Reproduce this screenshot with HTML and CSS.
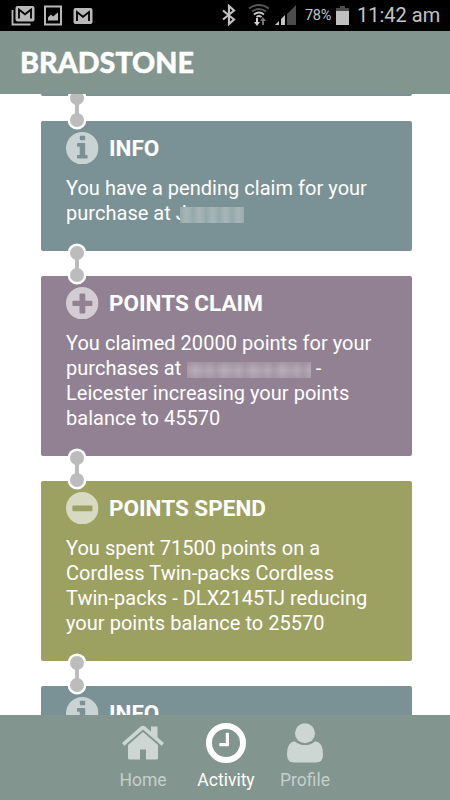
FILE: index.html
```html
<!DOCTYPE html>
<html lang="en">
<head>
<meta charset="utf-8">
<title>Bradstone Activity</title>
<link rel="stylesheet" href="styles.css">
</head>
<body>
<svg class="defs" width="0" height="0" aria-hidden="true">
  <symbol id="link" viewBox="0 0 20 42">
    <circle cx="10" cy="10" r="9.4" fill="#fff"/><circle cx="10" cy="32" r="9.4" fill="#fff"/>
    <path d="M8 10h4v22H8z" fill="#bcbcbc"/>
    <circle cx="10" cy="10" r="7" fill="#bcbcbc"/><circle cx="10" cy="32" r="7" fill="#bcbcbc"/>
  </symbol>
  <symbol id="info" viewBox="0 0 32 32">
    <path fill-rule="evenodd" d="M16 0a16 16 0 1 0 0 32a16 16 0 1 0 0-32zM14.300 3.800h3.900q.7 0 .7.700v3q0 .7-.7.700h-3.900q-.7 0-.7-.7v-3q0-.7.7-.7zM11.500 10.900h6.700q.7 0 .7.700v11.100h1.700q.7 0 .7.700v2q0 .7-.7.700h-9.100q-.7 0-.7-.7v-2q0-.7.7-.7h2v-8.300h-2q-.7 0-.7-.7v-2.100q0-.7.7-.7z"/>
  </symbol>
  <symbol id="plus" viewBox="0 0 32 32">
    <path fill-rule="evenodd" d="M16 0a16 16 0 1 0 0 32a16 16 0 1 0 0-32zM14.300 6.300h3.700q1 0 1 1v6.200h6q1 0 1 1v3.300q0 1-1 1h-6v6.200q0 1-1 1h-3.700q-1 0-1-1v-6.200h-6q-1 0-1-1v-3.300q0-1 1-1h6V7.300q0-1 1-1z"/>
  </symbol>
  <symbol id="minus" viewBox="0 0 32 32">
    <path fill-rule="evenodd" d="M16 0a16 16 0 1 0 0 32a16 16 0 1 0 0-32zM7.300 13.300h17.700q1 0 1 1v3.700q0 1-1 1H7.300q-1 0-1-1v-3.700q0-1 1-1z"/>
  </symbol>
</svg>
<div class="screen">
  <div class="status">
    <svg class="status-left" width="86" height="22" viewBox="0 0 86 22" fill="#b9b9b9">
      <path d="M1.500 5v14.500h18" fill="none" stroke="#b9b9b9" stroke-width="1.800"/>
      <rect x="4.500" y="1" width="19" height="15.500" rx="2"/>
      <path d="M8 13.500V4.500l6 4.800 6-4.800v9" fill="none" stroke="#000" stroke-width="1.800"/>
      <rect x="34" y="1.500" width="16" height="18" fill="none" stroke="#b9b9b9" stroke-width="2"/>
      <path d="M37 15.500v-3l3-3 2 2 5-4v8z"/>
      <rect x="62.500" y="3" width="19" height="16" rx="2"/>
      <path d="M66 16V7l6 4.800L78 7v9" fill="none" stroke="#000" stroke-width="1.800"/>
    </svg>
    <svg class="status-right" width="77" height="23" viewBox="0 0 77 23">
      <path d="M2 6.500l11 9-5 4.500V2L13 6.500l-11 9" fill="none" stroke="#c0c0c0" stroke-width="2.200"/>
      <path d="M28 4.500Q38-2.500 48 4.500M31 7.500Q38 2.500 45 7.500" fill="none" stroke="#555" stroke-width="2"/>
      <path d="M33 10.500Q38 6.500 43 10.500M35.500 13Q38 11 40.500 13" fill="none" stroke="#c4c4c4" stroke-width="2"/>
      <path d="M35 14h2v4h2l-3 4-3-4h2z" fill="#d0d0d0"/>
      <path d="M41 21v-4h-2l3-4 3 4h-2v4z" fill="#777"/>
      <path d="M54 21l4-4v4zM60 21v-6l4-4v10z" fill="#c4c4c4"/>
      <path d="M66 21V10L75 1v20z" fill="#4c4c4c"/>
    </svg>
    <span class="percent">78%</span>
    <svg class="battery" width="13" height="20" viewBox="0 0 13 20"><path d="M4 0h5v2h4v5H0V2h4z" fill="#4c4c4c"/><path d="M0 5h13v14H0z" fill="#c0c0c0"/></svg>
    <span class="time">11:42 am</span>
  </div>
  <header class="header">
    <svg class="brand" width="190" height="30" viewBox="0 0 190 30"><text x="-1" y="25" textLength="174" lengthAdjust="spacingAndGlyphs">BRADSTONE</text></svg>
  </header>
  <main class="feed">
    <section class="card teal previous"></section>
    <section class="card teal">
      <svg class="link"><use href="#link"/></svg>
      <h2><svg class="icon"><use href="#info"/></svg><span>INFO</span></h2>
      <p>You have a pending claim for your<br>purchase at J<span class="hidden-name short"></span></p>
    </section>
    <section class="card purple">
      <svg class="link"><use href="#link"/></svg>
      <h2><svg class="icon"><use href="#plus"/></svg><span>POINTS CLAIM</span></h2>
      <p>You claimed 20000 points for your<br>purchases at <span class="hidden-name long"></span> -<br>Leicester increasing your points<br>balance to 45570</p>
    </section>
    <section class="card green">
      <svg class="link"><use href="#link"/></svg>
      <h2><svg class="icon"><use href="#minus"/></svg><span>POINTS SPEND</span></h2>
      <p>You spent 71500 points on a<br>Cordless Twin-packs Cordless<br>Twin-packs - DLX2145TJ reducing<br>your points balance to 25570</p>
    </section>
    <section class="card teal">
      <svg class="link"><use href="#link"/></svg>
      <h2><svg class="icon"><use href="#info"/></svg><span>INFO</span></h2>
    </section>
  </main>
  <nav class="tabs">
    <a class="tab home">
      <svg width="42" height="42" viewBox="0 0 42 42"><path d="M0 21L18.800 4.600q2.200-1.900 4.400 0L29 9.700V4.500h6.500v10.700L42 21l-2.300 2.700L21 7.500 2.300 23.700z"/><path d="M21 10l15 13v13q0 1.500-1.500 1.500H24V27.500h-6v10H7.500Q6 37.500 6 36V23z"/></svg>
      <span>Home</span>
    </a>
    <a class="tab active">
      <svg width="42" height="42" viewBox="0 0 42 42"><circle cx="21" cy="21" r="17" fill="none" stroke="#fff" stroke-width="6"/><path d="M20.800 11.500q0-.7.7-.7h1.800q.7 0 .7.700v12q0 .7-.7.700H15q-.7 0-.7-.7v-1.800q0-.7.700-.7h5.800z"/></svg>
      <span>Activity</span>
    </a>
    <a class="tab profile">
      <svg width="42" height="42" viewBox="0 0 42 42"><circle cx="21" cy="11.300" r="10"/><path d="M10.500 19.200Q21 27 31.500 19.200Q39 20 39 32.500Q39 40.500 32 40.500H10Q3 40.500 3 32.500Q3 20 10.500 19.200z"/></svg>
      <span>Profile</span>
    </a>
  </nav>
</div>
</body>
</html>
```

FILE: styles.css
```css
* { box-sizing: border-box; }
body { margin: 0; background: #fff; font-family: Roboto, "Liberation Sans", sans-serif; color: #fff; }
.defs { position: absolute; }
.screen { width: 450px; height: 800px; display: flex; flex-direction: column; overflow: hidden; }
.status { height: 31px; flex: none; background: #000; display: flex; align-items: center; padding: 0 10px 0 11px; color: #c4c4c4; white-space: nowrap; }
.status-left { margin-right: auto; }
.status-right { margin-right: 7px; }
.percent { width: 27px; font-size: 14.500px; line-height: 33px; letter-spacing: -0.300px; }
.battery { margin: 0 8px 0 4px; }
.time { width: 83px; font-size: 20px; line-height: 33px; }
.header { height: 63px; flex: none; background: #82958f; padding: 17px 21px; }
.brand { display: block; overflow: visible; }
.brand text { font-family: Lato, sans-serif; font-weight: 900; font-size: 28px; fill: #fff; stroke: #fff; stroke-width: 0.400px; }
.feed { flex: 1; min-height: 0; overflow: hidden; padding: 0 38px 0 41px; display: flex; flex-direction: column; gap: 25px; }
.card { position: relative; flex: none; border-radius: 2px; padding: 11px 25px 19px; }
.card.previous { height: 2px; padding: 0; border-radius: 0 0 2px 2px; }
.teal { background: #7a9295; }
.purple { background: #918193; }
.green { background: #9ca061; }
.link { position: absolute; left: 26px; top: -33.300px; width: 20px; height: 42px; }
h2 { margin: 0; height: 32px; display: flex; align-items: center; gap: 10.500px; font-size: 22.500px; font-weight: 700; line-height: 32px; white-space: nowrap; }
.icon { width: 32.500px; height: 32.500px; flex: none; fill: rgba(255, 255, 255, 0.600); }
p { margin: 12px 0 6px; font-size: 20px; line-height: 25px; letter-spacing: 0.030px; white-space: nowrap; }
.hidden-name { display: inline-block; height: 16px; vertical-align: -3px; margin-top: -4px; }
.short { position: relative; width: 64px; margin-left: -6.500px; background: repeating-linear-gradient(90deg, #94a8aa 0, #a6b6b8 6px, #9eb0b2 10px, #94a8aa 13px); }
.long { width: 124px; margin-left: 0.500px; background: linear-gradient(rgba(145, 129, 147, 0.500), rgba(145, 129, 147, 0) 50%, rgba(145, 129, 147, 0.350)), repeating-linear-gradient(90deg, #a99cab 0, #b9aebb 8px, #ada1af 17px, #b5aab7 23px, #a99cab 29px); }
.tabs { height: 85px; flex: none; background: #82958f; display: flex; justify-content: center; padding: 7px 6px 0 0; }
.tab { width: 82px; display: flex; flex-direction: column; align-items: center; fill: #ced6d3; color: #c6cfcc; font-size: 17.500px; line-height: 22px; }
.tab svg { display: block; margin-bottom: 5px; }
.tab.active { fill: #fff; color: #fff; }
.tab.profile { width: 76px; }
.tab.home { width: 84px; }
```
